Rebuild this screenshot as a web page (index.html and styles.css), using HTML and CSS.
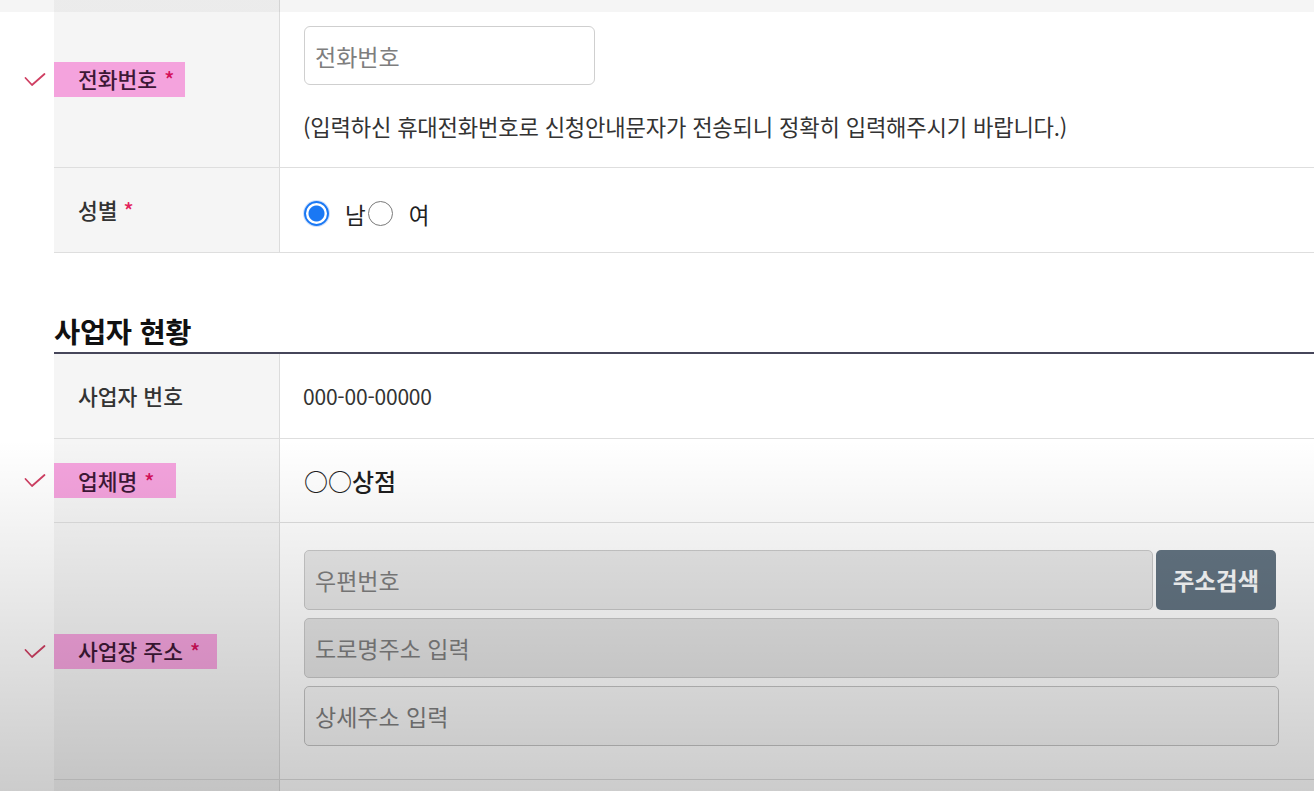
FILE: index.html
```html
<!DOCTYPE html>
<html lang="ko">
<head>
<meta charset="utf-8">
<title>신청서</title>
<link rel="stylesheet" href="styles.css">
</head>
<body>
<div class="page">
  <div class="form first">
    <div class="row">
      <div class="th">
        <span class="label hl hl-phone">
          <svg class="check" viewBox="0 0 22 16" width="22" height="16"><polyline points="1.5,6 8,13 20.5,2" fill="none" stroke="#cf3f62" stroke-width="1.8" stroke-linecap="round" stroke-linejoin="round"/></svg>
          전화번호 <span class="req">*</span>
        </span>
      </div>
      <div class="td phone">
        <div class="input phone-input"><span class="ph">전화번호</span></div>
        <p class="help">(입력하신 휴대전화번호로 신청안내문자가 전송되니 정확히 입력해주시기 바랍니다.)</p>
      </div>
    </div>
    <div class="row r84">
      <div class="th"><span class="label">성별 <span class="req">*</span></span></div>
      <div class="td radios">
        <span class="radio checked"></span><span class="rlabel">남</span><span class="radio"></span><span class="rlabel">여</span>
      </div>
    </div>
  </div>

  <h2 class="section">사업자 현황</h2>
  <div class="form">
    <div class="row r84">
      <div class="th"><span class="label">사업자 번호</span></div>
      <div class="td"><span class="value">000-00-00000</span></div>
    </div>
    <div class="row r83">
      <div class="th">
        <span class="label hl hl-company">
          <svg class="check" viewBox="0 0 22 16" width="22" height="16"><polyline points="1.5,6 8,13 20.5,2" fill="none" stroke="#cf3f62" stroke-width="1.8" stroke-linecap="round" stroke-linejoin="round"/></svg>
          업체명 <span class="req">*</span>
        </span>
      </div>
      <div class="td"><span class="value strong">○○상점</span></div>
    </div>
    <div class="row">
      <div class="th">
        <span class="label hl hl-addr">
          <svg class="check" viewBox="0 0 22 16" width="22" height="16"><polyline points="1.5,6 8,13 20.5,2" fill="none" stroke="#cf3f62" stroke-width="1.8" stroke-linecap="round" stroke-linejoin="round"/></svg>
          사업장 주소 <span class="req">*</span>
        </span>
      </div>
      <div class="td address">
        <div class="addr-line">
          <div class="input ro grow"><span class="ph">우편번호</span></div>
          <button class="btn">주소검색</button>
        </div>
        <div class="input ro2"><span class="ph">도로명주소 입력</span></div>
        <div class="input light"><span class="ph">상세주소 입력</span></div>
      </div>
    </div>
    <div class="row tail">
      <div class="th"></div>
      <div class="td"></div>
    </div>
  </div>
</div>
<div class="shade"></div>
</body>
</html>
```

FILE: styles.css
```css
* { box-sizing: border-box; }
html, body { margin: 0; padding: 0; }
body {
  width: 1314px;
  height: 791px;
  overflow: hidden;
  background: #fff;
  font-family: "Noto Sans CJK KR", "Noto Sans", sans-serif;
  color: #333;
  position: relative;
}
.page { padding-left: 54px; }
.form.first { margin-top: -9px; }
.row {
  display: grid;
  grid-template-columns: 226px 1fr;
  border-bottom: 1px solid #dedede;
}
.r84 { height: 85px; }
.r83 { height: 84px; }
.th {
  background: #f5f5f5;
  border-right: 1px solid #dcdcdc;
  display: flex;
  align-items: center;
  padding-left: 24px;
}
.td {
  display: flex;
  align-items: center;
  padding-left: 24px;
}
.label {
  font-size: 21.5px;
  line-height: 34px;
  color: #333;
  font-weight: 500;
  white-space: nowrap;
}
.req { color: #e3245c; font-size: 21px; }
.hl {
  position: relative;
  display: inline-flex;
  align-items: center;
  height: 35px;
  margin-left: -24px;
  padding: 0 7px 0 24px;
  background: #f4a3dd;
  color: #3d1836;
}
.hl-phone { padding-right: 11px; }
.hl-company { padding-right: 21px; }
.hl-addr { padding-right: 17px; }
.hl .req { color: #d4105a; margin-left: 7px; }
.check {
  position: absolute;
  left: -30px;
  top: 10px;
}
.td.phone {
  flex-direction: column;
  align-items: flex-start;
  padding-top: 35px;
  padding-bottom: 26px;
}
.input {
  height: 60px;
  border: 1px solid #c4c4c4;
  border-radius: 5px;
  background: #fff;
  display: flex;
  align-items: center;
  padding-left: 10px;
}
.ph { font-size: 23px; color: #7e7e7e; }
.phone-input { width: 291px; height: 59px; border-color: #cfcfcf; border-radius: 6px; }
.help {
  margin: 26px 0 0 -1px;
  font-size: 22.2px;
  line-height: 30px;
  color: #333;
  letter-spacing: -0.2px;
}
.radios { padding-top: 7px; }
.radio {
  width: 25px;
  height: 25px;
  border-radius: 50%;
  border: 1.5px solid #7a7a7a;
  background: #fff;
  display: inline-block;
  flex: none;
}
.radio.checked {
  border: 2px solid #1a78f4;
  background: radial-gradient(circle, #1a78f4 0 7.5px, #fff 8.5px);
  box-shadow: 0 0 0 1px #cfe0fb;
}
.rlabel { font-size: 22.5px; color: #222; margin-left: 16px; margin-right: 2px; }
.section {
  margin: 60px 0 0;
  padding-bottom: 3px;
  font-size: 28.5px;
  line-height: 36px;
  font-weight: 700;
  color: #111;
  letter-spacing: -0.3px;
  border-bottom: 2px solid #46465a;
}
.value { font-size: 21px; color: #333; margin-left: -1px; letter-spacing: -0.2px; }
.value.strong { color: #1e1e1e; font-weight: 500; letter-spacing: 0; font-size: 24px; margin-left: 0; }
.td.address {
  flex-direction: column;
  align-items: stretch;
  gap: 8px;
  padding-top: 27px;
  padding-bottom: 33px;
  padding-right: 35px;
}
.addr-line { display: flex; gap: 3px; }
.grow { flex: 1; }
.ro { background: #e8e8e8; border-color: #c9c9c9; }
.ro2 { background: #e4e4e4; border-color: #c9c9c9; }
.light { background: #f7f7f7; border-color: #c4c4c4; }
.btn {
  width: 120px;
  height: 60px;
  margin-right: 3px;
  border: 0;
  border-radius: 5px;
  background: #637482;
  color: #fafbfc;
  font-family: inherit;
  font-size: 23.5px;
  font-weight: 700;
}
.tail { height: 40px; }
.shade {
  position: absolute;
  inset: 0;
  pointer-events: none;
  background:
    linear-gradient(to bottom, rgba(0,0,0,0.04) 0, rgba(0,0,0,0.04) 12px, rgba(0,0,0,0) 12px),
    linear-gradient(to bottom, rgba(0,0,0,0) 0, rgba(0,0,0,0) 440px, rgba(0,0,0,0.2) 791px);
}
```
